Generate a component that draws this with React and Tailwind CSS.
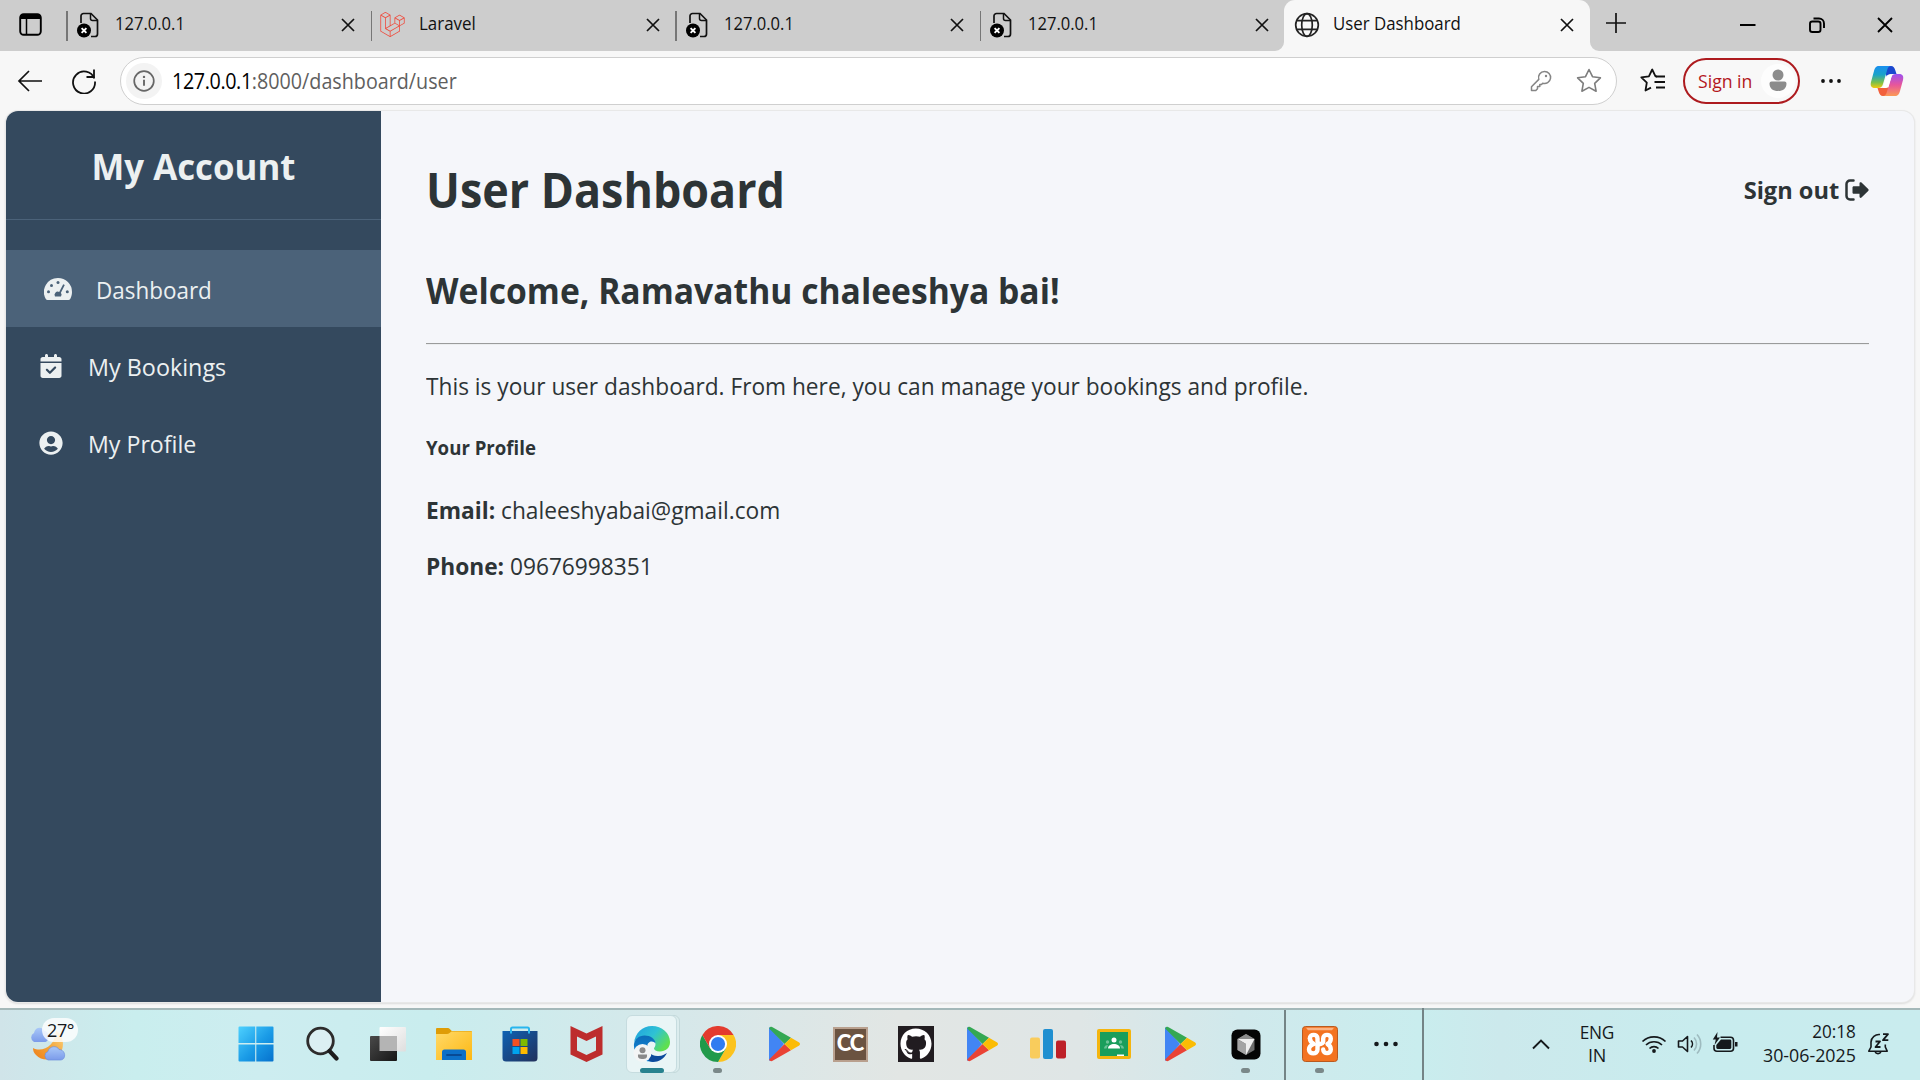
import React from "react";
import { FaUserCircle, FaGithub } from "react-icons/fa";
import { FaCalendarCheck } from "react-icons/fa6";
import { SiLaravel } from "react-icons/si";

/* ---------- small shared icons ---------- */

function Cross({ size }) {
  return (
    <svg width={size} height={size} viewBox="0 0 14 14" fill="none" stroke="#111" strokeWidth="1.7">
      <path d="M1 1l12 12M13 1L1 13" />
    </svg>
  );
}

function PageErrorIcon() {
  return (
    <svg width="24" height="26" viewBox="0 0 24 26" fill="none">
      <path d="M5 11V4a2.500 2.500 0 0 1 2.500-2.500H15L21.500 8v14a2.500 2.500 0 0 1-2.500 2.500h-4" stroke="#111" strokeWidth="1.700" />
      <path d="M14.500 1.500V6.500a2 2 0 0 0 2 2h5" stroke="#111" strokeWidth="1.500" />
      <circle cx="8" cy="18.500" r="7" fill="#000" />
      <path d="M5.600 16.100l4.800 4.800M10.400 16.100l-4.800 4.800" stroke="#fff" strokeWidth="1.900" />
    </svg>
  );
}

function GlobeIcon() {
  return (
    <svg width="26" height="26" viewBox="0 0 26 26" fill="none" stroke="#222" strokeWidth="1.700">
      <circle cx="13" cy="13" r="11.300" />
      <ellipse cx="13" cy="13" rx="5.300" ry="11.300" />
      <path d="M3 8.700h20M3 17.300h20" />
    </svg>
  );
}

function GaugeIcon() {
  return (
    <svg width="28" height="22" viewBox="0 0 28 22">
      <path d="M14 0a14 14 0 0 1 14 14c0 2.600-.7 4.900-1.800 7a2 2 0 0 1-1.700 1H3.500a2 2 0 0 1-1.700-1A14 14 0 0 1 14 0z" fill="#ecf0f1" />
      <g fill="#4b6279">
        <circle cx="14" cy="4.500" r="1.500" />
        <circle cx="7.500" cy="7.600" r="1.500" />
        <circle cx="4.500" cy="13.800" r="1.500" />
        <circle cx="23.300" cy="13.800" r="1.500" />
        <path d="M19.200 6.200l1.600.9-3.900 7.700a3.200 3.200 0 0 1 .1 3.700h-6a3.200 3.200 0 0 1 4.200-4.500z" />
      </g>
    </svg>
  );
}

/* ---------- browser tabs ---------- */

function Tab({ icon, label, scale }) {
  return (
    <div className="flex h-[51px] w-[304.500px] shrink-0 items-center">
      <div className="h-[30px] w-[1.500px] bg-[#767676]" />
      <div className="ml-[7px] flex w-[26px] justify-center pb-[2px]">{icon}</div>
      <span className={"ml-[14px] -mt-[5px] flex-1 origin-left text-[18px] leading-6 text-[#111] " + scale}>{label}</span>
      <div className="mr-[15.500px] pb-px">
        <Cross size={14} />
      </div>
    </div>
  );
}

function TabStrip() {
  return (
    <div className="flex h-[51px] bg-[#cdcdcd]">
      <div className="flex w-[66px] items-center pb-[2px] pl-[18.500px]">
        <svg width="23" height="23" viewBox="0 0 23 23" fill="none">
          <rect x="1.200" y="1.200" width="20.600" height="20.600" rx="3.500" stroke="#000" strokeWidth="1.900" />
          <path d="M1 6V4.500A3.500 3.500 0 0 1 4.500 1h14A3.500 3.500 0 0 1 22 4.500V6z" fill="#000" />
          <path d="M7.500 6v15.500" stroke="#000" strokeWidth="1.500" />
        </svg>
      </div>
      <Tab icon={<PageErrorIcon />} label="127.0.0.1" scale="scale-x-[.92]" />
      <Tab icon={<SiLaravel size={25} color="#ef4a3c" />} label="Laravel" scale="scale-x-[.94]" />
      <Tab icon={<PageErrorIcon />} label="127.0.0.1" scale="scale-x-[.92]" />
      <Tab icon={<PageErrorIcon />} label="127.0.0.1" scale="scale-x-[.92]" />
      <div className="-ml-[9px] flex shrink-0 items-end">
        <svg width="9" height="9" viewBox="0 0 9 9">
          <path d="M9 0v9H0A9 9 0 0 0 9 0z" fill="#f7f7f7" />
        </svg>
        <div className="flex h-[51px] w-[306px] items-center rounded-t-[11px] bg-[#f7f7f7] pl-[10px]">
          <div className="pb-[2px]">
            <GlobeIcon />
          </div>
          <span className="ml-[13px] -mt-[5px] flex-1 origin-left scale-x-[.935] text-[18px] leading-6 text-[#111]">User Dashboard</span>
          <div className="mr-[16.500px] pb-px">
            <Cross size={14} />
          </div>
        </div>
        <svg width="9" height="9" viewBox="0 0 9 9">
          <path d="M0 0v9h9A9 9 0 0 1 0 0z" fill="#f7f7f7" />
        </svg>
      </div>
      <div className="ml-[6px] flex h-[46px] items-center">
        <svg width="22" height="22" viewBox="0 0 22 22" stroke="#111" strokeWidth="1.700">
          <path d="M11 1v20M1 11h20" />
        </svg>
      </div>
      <div className="ml-auto flex items-center pb-px pr-[27px]">
        <svg width="16" height="16" viewBox="0 0 16 16" stroke="#000" strokeWidth="2">
          <path d="M0 8h15.500" />
        </svg>
        <svg className="ml-[53px]" width="16" height="16" viewBox="0 0 16 16" fill="none" stroke="#000" strokeWidth="1.900">
          <rect x="1" y="4.500" width="10.500" height="10.500" rx="2.300" />
          <path d="M4.500 1.500H10a5 5 0 0 1 5 5V11" />
        </svg>
        <div className="ml-[52px]">
          <svg width="16" height="16" viewBox="0 0 16 16" stroke="#000" strokeWidth="1.800">
            <path d="M1 1l14 14M15 1L1 15" />
          </svg>
        </div>
      </div>
    </div>
  );
}

/* ---------- address bar ---------- */

function CopilotIcon() {
  return (
    <svg width="34" height="32" viewBox="0 0 34 32">
      <defs>
        <linearGradient id="cpA" x1="0" y1="0" x2="0" y2="1">
          <stop offset="0" stopColor="#1a8ff0" />
          <stop offset=".4" stopColor="#1ba3c8" />
          <stop offset=".75" stopColor="#7cc04a" />
          <stop offset="1" stopColor="#f4c90c" />
        </linearGradient>
        <linearGradient id="cpB" x1="0" y1="0" x2="0" y2="1">
          <stop offset="0" stopColor="#9d50f0" />
          <stop offset=".5" stopColor="#e8569a" />
          <stop offset="1" stopColor="#fb9a55" />
        </linearGradient>
      </defs>
      <path d="M18 1h3c2.500 0 3.500 1.800 4.200 4l1.300 4h-6c-2 0-3 1-3.600 3l-2-5z" fill="#1b48cf" />
      <path d="M16 31h-3c-2.500 0-3.500-1.800-4.200-4l-1.300-4h6c2 0 3-1 3.600-3l2 5z" fill="#f2603c" />
      <path d="M9 1h12c-2 0-3 1.200-3.700 3.500L13 19c-.8 2.800-2 4-5 4H5c-4 0-4.800-2.500-4-6L4 6c1-3.500 2-5 5-5z" fill="url(#cpA)" />
      <path d="M25 31H13c2 0 3-1.200 3.700-3.500L21 13c.8-2.800 2-4 5-4h3c4 0 4.800 2.500 4 6l-3 11c-1 3.500-2 5-5 5z" fill="url(#cpB)" />
      <path d="M18.800 10h2.600c.6 0 .6.300.4 1l-3 10c-.5 1.300-1 2-2.600 2h-2.800c-.5 0-.5-.3-.3-.8l3.200-10.500c.4-1.200 1.200-1.700 2.500-1.700z" fill="#fff" />
    </svg>
  );
}

function Toolbar() {
  return (
    <div className="flex h-[60px] items-center bg-[#f7f7f7] pb-[1px]">
      <svg className="ml-[17px]" width="26" height="24" viewBox="0 0 26 24" fill="none" stroke="#111" strokeWidth="1.700">
        <path d="M12 2L2 12l10 10M2 12h23" />
      </svg>
      <svg className="ml-[28px]" width="26" height="26" viewBox="0 0 26 26" fill="none" stroke="#111" strokeWidth="1.800">
        <path d="M23.300 10.500A11 11 0 1 0 24 13.500" />
        <path d="M23 1.500V9h-7.500" />
      </svg>
      <div className="ml-[23px] flex h-[48px] w-[1497px] shrink-0 items-center rounded-full border-[1.500px] border-[#cfcfcf] bg-white">
        <div className="ml-[5px] flex size-9 items-center justify-center rounded-full bg-[#f3f3f3]">
          <svg width="22" height="22" viewBox="0 0 22 22" fill="none">
            <circle cx="11" cy="11" r="9.800" stroke="#666" strokeWidth="1.700" />
            <path d="M11 9.800v6" stroke="#666" strokeWidth="1.900" />
            <circle cx="11" cy="6.900" r="1.200" fill="#666" />
          </svg>
        </div>
        <div className="ml-[10px] origin-left scale-x-[.939] whitespace-nowrap pt-px text-[21px] leading-[30px] text-[#5f5f5f]">
          <span className="tracking-[-0.400px] text-black">127.0.0.1</span>:8000/dashboard/user
        </div>
        <svg className="ml-auto" width="22" height="22" viewBox="0 0 22 22" fill="none" stroke="#858585" strokeWidth="1.500">
          <path d="M14.500 1.500a6 6 0 1 1-1.800 11.700L11.500 14.500H9.800v2H7.500v2.200L5.800 20.500H1.500v-3.800l7.300-7.300A6 6 0 0 1 14.500 1.500z" strokeLinejoin="round" />
          <circle cx="16" cy="6" r="1.200" fill="#858585" stroke="none" />
        </svg>
        <svg className="ml-[24px] mr-[14px]" width="26" height="25" viewBox="0 0 26 25" fill="none" stroke="#7d7d7d" strokeWidth="1.600" strokeLinejoin="round">
          <path d="M13 1.500l3.500 7.200 7.900 1.100-5.700 5.500 1.400 7.900-7.100-3.800-7.100 3.800 1.400-7.900-5.700-5.500 7.900-1.100z" />
        </svg>
      </div>
      <svg className="ml-[23px]" width="26" height="25" viewBox="0 0 26 25" fill="none" stroke="#111" strokeWidth="1.800" strokeLinejoin="round">
        <path d="M16.800 8.500l-1.300-.2L12.200 1.500 8.900 8.300l-7.600 1.100 5.500 5.300-1.300 7.800 5.500-2.900" />
        <path d="M16 8.500h9M14.500 14h10.500M16 19.500h9" />
      </svg>
      <div className="ml-[17px] flex h-[46px] w-[117px] shrink-0 items-center rounded-full border-2 border-[#ad1a1e] bg-[#f8f8f8] pl-[13px]">
        <span className="w-[56px] origin-left scale-x-[.98] whitespace-nowrap text-[18px] leading-6 text-[#b3171d]">Sign in</span>
        <div className="ml-[7px] flex size-[34px] items-center justify-center rounded-full bg-[#fdfdfd]">
          <svg width="18" height="23" viewBox="0 0 18 23" fill="#8c8c8c">
            <circle cx="9" cy="6" r="5.500" />
            <path d="M2.500 12.500h13A2 2 0 0 1 17.500 14.500c0 5-3.500 7.500-8.500 7.500S.5 19.500.5 14.500a2 2 0 0 1 2-2z" />
          </svg>
        </div>
      </div>
      <svg className="ml-[20px]" width="22" height="6" viewBox="0 0 22 6" fill="#111">
        <circle cx="3" cy="3" r="1.900" />
        <circle cx="11" cy="3" r="1.900" />
        <circle cx="19" cy="3" r="1.900" />
      </svg>
      <div className="ml-[28px]">
        <CopilotIcon />
      </div>
    </div>
  );
}

/* ---------- page ---------- */

function NavItem({ icon, label, active, scale }) {
  return (
    <div className={"flex h-[77px] items-center pt-[2px] text-[#ecf0f1] " + (active ? "bg-[#4b6279] pl-[37px]" : "pl-[30px]")}>
      <div className="flex w-[30px] justify-center pb-px">{icon}</div>
      <span className={"origin-left whitespace-nowrap pt-px text-[24px] leading-9 " + (active ? "ml-[23px] " : "ml-[22px] ") + scale}>{label}</span>
    </div>
  );
}

function Sidebar() {
  return (
    <div className="w-[375px] shrink-0 bg-[#34495e]">
      <div className="flex h-[109px] items-center justify-center border-b border-[#4b6279] pt-[3px]">
        <h2 className="scale-x-[.967] text-[36px] font-bold leading-[54px] text-[#ecf0f1]">My Account</h2>
      </div>
      <div className="pt-[30px]">
        <NavItem active icon={<GaugeIcon />} label="Dashboard" scale="scale-x-[.935]" />
        <NavItem icon={<FaCalendarCheck size={24} />} label="My Bookings" scale="scale-x-[.973]" />
        <NavItem icon={<FaUserCircle size={24} />} label="My Profile" scale="scale-x-[.965]" />
      </div>
    </div>
  );
}

function Main() {
  return (
    <div className="min-w-0 flex-1 px-[45px] pt-[49px] text-[#2d3436]">
      <div className="flex h-[60px] items-center justify-between">
        <h1 className="origin-left scale-x-[.935] text-[48px] font-bold leading-[60px]">User Dashboard</h1>
        <div className="-mt-px flex items-center">
          <span className="origin-right scale-x-[.983] whitespace-nowrap text-[24px] font-bold leading-9">Sign out</span>
          <svg className="ml-[6px]" width="24" height="22" viewBox="0 0 24 22" fill="none">
            <path d="M8.500 1.500H5A3.500 3.500 0 0 0 1.500 5v12A3.500 3.500 0 0 0 5 20.500h3.500" stroke="#2d3436" strokeWidth="2.500" strokeLinecap="round" />
            <path d="M8.800 7.300h5.700V4.500c0-1.300 1.200-1.700 2-.9l6.700 6.500c.6.600.6 1.300 0 1.900l-6.700 6.500c-.8.800-2 .3-2-.9v-2.900H8.800c-.8 0-1.300-.6-1.300-1.300V8.600c0-.7.500-1.300 1.300-1.300z" fill="#2d3436" />
          </svg>
        </div>
      </div>
      <h2 className="mt-[44px] w-max origin-left scale-x-[.935] text-[36px] font-bold leading-[54px]">Welcome, Ramavathu chaleeshya bai!</h2>
      <div className="mt-[25px] h-[2px] border-b border-t border-b-[#ebedef] border-t-[#9a9b9b]" />
      <p className="mt-[23px] w-max origin-left scale-x-[.9455] text-[24px] leading-9">
        This is your user dashboard. From here, you can manage your bookings and profile.
      </p>
      <h5 className="mt-[29px] w-max origin-left scale-x-[.931] text-[20px] font-bold leading-[30px]">Your Profile</h5>
      <p className="mt-[29px] w-max origin-left scale-x-[.947] text-[24px] leading-9">
        <strong>Email:</strong> chaleeshyabai@gmail.com
      </p>
      <p className="mt-[20px] w-max origin-left scale-x-[.946] text-[24px] leading-9">
        <strong>Phone:</strong> 09676998351
      </p>
    </div>
  );
}

/* ---------- taskbar ---------- */

function PlayIcon() {
  return (
    <svg width="33" height="36" viewBox="0 0 33 36">
      <path d="M1 3v30c0 1 .4 1.600 1 2l14-17L2 1C1.400 1.400 1 2 1 3z" fill="#4285f4" />
      <path d="M2 1.200C3 .6 4 .8 5 1.400l18 10.400L16.500 18 1.200 2.500c.1-.6.3-1 .8-1.300z" fill="#34a853" />
      <path d="M2 34.800c1 .6 2 .4 3-.2l18-10.400L16.500 18 1.200 33.500c.1.600.3 1 .8 1.300z" fill="#ea4335" />
      <path d="M23 11.800l7.800 4.400c1.600 1 1.600 2.600 0 3.600L23 24.200 16.500 18z" fill="#fbbc04" />
    </svg>
  );
}

function StartIcon() {
  return (
    <svg width="36" height="36" viewBox="0 0 36 36">
      <defs>
        <linearGradient id="win" gradientUnits="userSpaceOnUse" x1="0" y1="0" x2="36" y2="36">
          <stop offset="0" stopColor="#4fd2ff" />
          <stop offset=".55" stopColor="#199ae6" />
          <stop offset="1" stopColor="#0670cc" />
        </linearGradient>
      </defs>
      <path d="M1.500.5H17.200V17H.5V1.500a1 1 0 0 1 1-1zM18.300.5H34.500a1 1 0 0 1 1 1V17H18.300zM.5 18.500H17.200V35.500H1.500a1 1 0 0 1-1-1zM18.300 18.500H35.500v16a1 1 0 0 1-1 1H18.300z" fill="url(#win)" />
    </svg>
  );
}

function SearchIcon() {
  return (
    <svg width="34" height="36" viewBox="0 0 34 36" fill="none">
      <circle cx="15.500" cy="15" r="12.800" stroke="#2d2c2c" strokeWidth="2.800" fill="#dceff3" />
      <path d="M24.500 25l7 7.500" stroke="#1d1c1c" strokeWidth="4.200" strokeLinecap="round" />
    </svg>
  );
}

function TaskViewIcon() {
  return (
    <svg width="36" height="36" viewBox="0 0 36 36">
      <defs>
        <linearGradient id="tvA" x1="0" y1="0" x2="1" y2="1">
          <stop offset="0" stopColor="#4a4a4a" />
          <stop offset="1" stopColor="#161616" />
        </linearGradient>
        <linearGradient id="tvB" x1="0" y1="0" x2="1" y2="1">
          <stop offset="0" stopColor="#fff" />
          <stop offset="1" stopColor="#dedede" />
        </linearGradient>
      </defs>
      <rect x="9.500" y="1" width="26.500" height="24.500" rx="1" fill="url(#tvB)" />
      <rect x="0" y="10" width="27" height="25" rx="1" fill="url(#tvA)" />
      <rect x="9.500" y="10" width="17.500" height="15" fill="#b4b4b4" />
    </svg>
  );
}

function FolderIcon() {
  return (
    <svg width="36" height="34" viewBox="0 0 36 34">
      <defs>
        <linearGradient id="fol" x1="0" y1="0" x2="1" y2="1">
          <stop offset="0" stopColor="#ffd968" />
          <stop offset="1" stopColor="#fdb813" />
        </linearGradient>
      </defs>
      <path d="M0 2a1 1 0 0 1 1-1h10.500c1 0 1.500.3 2.300 1l2 2H35a1 1 0 0 1 1 1v3H0z" fill="#df9c06" />
      <path d="M0 7h11c1 0 1.700-.3 2.500-1l2-1.500H36V33H0z" fill="url(#fol)" />
      <path d="M6 33v-8a2.500 2.500 0 0 1 2.500-2.500h19A2.500 2.500 0 0 1 30 25v8z" fill="#0c70c8" />
      <path d="M11 28h14" stroke="#084a94" strokeWidth="1.800" strokeLinecap="round" />
    </svg>
  );
}

function StoreIcon() {
  return (
    <svg width="36" height="36" viewBox="0 0 36 36">
      <defs>
        <linearGradient id="sto" x1="0" y1="0" x2="1" y2="1">
          <stop offset="0" stopColor="#0e62b4" />
          <stop offset="1" stopColor="#22315c" />
        </linearGradient>
      </defs>
      <path d="M9 8V3a1.500 1.500 0 0 1 1.500-1.500h15A1.500 1.500 0 0 1 27 3v5" fill="none" stroke="#29b6ee" strokeWidth="2" />
      <path d="M.5 5H35.500V32a3.500 3.500 0 0 1-3.500 3.500H4A3.500 3.500 0 0 1 .5 32z" fill="url(#sto)" />
      <path d="M9 7.500V5M27 7.500V5" stroke="#29b6ee" strokeWidth="2" />
      <path d="M10.500 13h7v7h-7z" fill="#f25022" />
      <path d="M18.500 13h7v7h-7z" fill="#7fba00" />
      <path d="M10.500 21h7v7h-7z" fill="#00a4ef" />
      <path d="M18.500 21h7v7h-7z" fill="#ffb900" />
    </svg>
  );
}

function McAfeeIcon() {
  return (
    <svg width="33" height="36" viewBox="0 0 33 36">
      <path d="M.5 0L16.500 7.500 32.500 0V28.500L16.500 36 .5 28.500zM7 10.500V24.500L16.500 29 26 24.500V10.500L16.500 15z" fill="#bd2d2d" fillRule="evenodd" />
    </svg>
  );
}

function EdgeIcon() {
  return (
    <svg width="38" height="36" viewBox="0 0 38 36">
      <defs>
        <linearGradient id="edA" x1="0" y1="0" x2="1" y2=".6">
          <stop offset="0" stopColor="#1f9fe0" />
          <stop offset=".55" stopColor="#2fc2d4" />
          <stop offset="1" stopColor="#5fe04f" />
        </linearGradient>
        <linearGradient id="edB" x1="0" y1="0" x2="0" y2="1">
          <stop offset="0" stopColor="#0c6cb8" />
          <stop offset="1" stopColor="#1590e0" />
        </linearGradient>
      </defs>
      <path d="M1 17C2 7 9.500 0 19 0c10 0 18 7 18 16 0 6-4.500 9.500-10 9.500-4 0-6-1.500-6-3 0-1 1.500-1.800 1.500-4.500 0-4-4.500-7.500-10-7.500C7 10.500 2.500 13 1 17z" fill="url(#edA)" />
      <path d="M1 18c1-5 5-8.500 10.500-8.500 6 0 11 3.500 11 8-1.500-2.500-5.500-3-7.500 0-3 5 0 13 8 17.500C10 38 0 29 1 18z" fill="url(#edB)" />
      <path d="M14.500 19c-1.500 5 3 11.500 11 11 4 0 6-1.500 8.500-3-3 6-8.500 9-14 9-5 0-8-4-8-9 0-3 1-6 2.500-8z" fill="#0c4a9c" />
      <circle cx="9.500" cy="27" r="9" fill="#f3f5f5" />
      <circle cx="9.500" cy="24.300" r="3" fill="#8a8a8a" />
      <path d="M5 28.500h9c.5 4-2 4.500-4.500 4.500S4.500 32.500 5 28.500z" fill="#8a8a8a" />
    </svg>
  );
}

function ChromeIcon() {
  return (
    <svg width="36" height="36" viewBox="0 0 36 36">
      <path d="M18 9H33.600A18 18 0 0 1 18 36L25.800 22.500z" fill="#fcc31e" />
      <path d="M10.200 22.500L2.400 9A18 18 0 0 0 18 36l7.800-13.500z" fill="#219a4a" />
      <path d="M18 9H33.600A18 18 0 0 0 2.400 9l7.800 13.500z" fill="#e33b2e" />
      <circle cx="18" cy="18" r="9" fill="#fff" />
      <circle cx="18" cy="18" r="7.100" fill="#2f7cf0" />
    </svg>
  );
}

function BarsIcon() {
  return (
    <svg width="36" height="30" viewBox="0 0 36 30">
      <rect x="0" y="8.500" width="10" height="21" rx="2" fill="#f9cc5c" />
      <rect x="13" y="0" width="10" height="30" rx="2" fill="#1f8fd0" />
      <rect x="26" y="11.500" width="10" height="18" rx="2" fill="#bd2028" />
    </svg>
  );
}

function ClassroomIcon() {
  return (
    <svg width="34" height="30" viewBox="0 0 34 30">
      <rect x="0" y="0" width="34" height="30" rx="2" fill="#f4b50f" />
      <rect x="3" y="3" width="28" height="24" fill="#1a9e5c" />
      <circle cx="17" cy="11" r="2.500" fill="#fff" />
      <path d="M11 19.500c0-3 3-4.500 6-4.500s6 1.500 6 4.500z" fill="#fff" />
      <circle cx="10.500" cy="13" r="1.700" fill="#6cc297" />
      <circle cx="23.500" cy="13" r="1.700" fill="#6cc297" />
      <path d="M7 19.500c0-2.500 2-3.500 4-3.500l-1.500 3.500zM27 19.500c0-2.500-2-3.500-4-3.500l1.500 3.500z" fill="#6cc297" />
      <path d="M20 25.500h7v1.500h-7z" fill="#fff" />
    </svg>
  );
}

function CursorIcon() {
  return (
    <svg width="30" height="31" viewBox="0 0 30 31">
      <rect x=".5" y=".5" width="29" height="30" rx="6" fill="#050505" />
      <path d="M15 5l8.500 5v11L15 26l-8.500-5V10z" fill="#6d6d6d" />
      <path d="M6.500 10L15 5l8.500 5z" fill="#8c8c8c" />
      <path d="M6.500 10h17L15 26V15z" fill="#efefef" />
      <path d="M6.500 10L15 15v11l-8.500-5z" fill="#a4a4a4" />
    </svg>
  );
}

function XamppIcon() {
  return (
    <svg width="36" height="36" viewBox="0 0 36 36">
      <rect x=".5" y=".5" width="35" height="35" rx="3" fill="#f37321" stroke="#b95a20" />
      <path d="M4 1.800h28l-2 2.400H6z" fill="#fbb384" />
      <g fill="none" stroke="#fff" strokeWidth="4.400" strokeLinecap="round" strokeLinejoin="round">
        <path d="M7.800 12.500c0-4.800 7.700-4.800 7.700 0v3c0 1.500.8 2.500 2.500 2.500s3.200-1 3.200-2.500v-3c0-4.800 7.600-4.800 7.600 0 0 2.500-1 4.200-3.300 5.500 2.300 1.300 3.300 3 3.300 5.500 0 4.800-7.600 4.800-7.600 0" />
        <path d="M8 12.500c0 2.200 1.300 4.200 3.800 5.500-3 1-4.800 2.600-4.800 5.500 0 5.200 8.500 5.200 8.500 0v-3c0-1.500.8-2.500 2.500-2.500" />
      </g>
    </svg>
  );
}

function Slot({ children, dot }) {
  return (
    <div className="relative flex h-[68px] w-[66px] shrink-0 items-center justify-center">
      {children}
      {dot && <div className="absolute bottom-[5px] left-[28px] h-[5px] w-[9px] rounded-full bg-[#7a8889]" />}
    </div>
  );
}

function WeatherIcon() {
  return (
    <svg width="40" height="38" viewBox="0 0 40 38">
      <defs>
        <linearGradient id="moon" x1="1" y1="0" x2="0" y2="1">
          <stop offset="0" stopColor="#fcd98a" />
          <stop offset=".5" stopColor="#f3a63a" />
          <stop offset="1" stopColor="#ee7d18" />
        </linearGradient>
        <linearGradient id="cloud" x1="0" y1="0" x2="0" y2="1">
          <stop offset="0" stopColor="#a9c8f8" />
          <stop offset="1" stopColor="#7b9bea" />
        </linearGradient>
      </defs>
      <path d="M28 6c6 5 8.500 12 6 20-4 10-19 13-26 5-2-2-3-4-3-7 9 5 23-2 23-18z" fill="url(#moon)" />
      <path d="M6 18a5 5 0 0 1 0-9C7 3 14 2 16.500 7c5 0 6 11 0 11z" fill="url(#cloud)" />
      <path d="M20 36a4.500 4.500 0 0 1 0-8.500c1-5.500 9-6.500 11-2 7 0 7.500 10.500 1.500 10.500z" fill="url(#cloud)" stroke="#6d8fdc" strokeWidth=".7" />
    </svg>
  );
}

function Taskbar() {
  return (
    <div className="flex h-[72px] border-t-2 border-[#a4b8b9] bg-[linear-gradient(90deg,#d0e4e9_0px,#c9eeee_135px,#cdedf0_260px,#c9edee_430px,#d6e8ea_680px,#e2e6e4_900px,#dfe6e6_1080px,#d0e9ec_1240px,#c9edee_1420px,#cce9ec_1500px,#c8ecee_1700px,#c9ecee_1920px)] text-[#15191c]">
      <div className="relative w-[223px] shrink-0 pl-[28px] pt-[14px]">
        <WeatherIcon />
        <div className="absolute left-[42px] top-[8px] flex h-[24px] w-[36px] items-center justify-center rounded-full bg-white/80 pb-px pl-px text-[18px] leading-none tracking-[-0.500px]">
          27°
        </div>
      </div>
      <Slot><StartIcon /></Slot>
      <Slot><SearchIcon /></Slot>
      <Slot><TaskViewIcon /></Slot>
      <Slot><FolderIcon /></Slot>
      <Slot><StoreIcon /></Slot>
      <Slot><McAfeeIcon /></Slot>
      <div className="relative flex h-[68px] w-[66px] shrink-0 items-center justify-center">
        <div className="absolute left-[10px] top-[5px] h-[58px] w-[51px] rounded-[6px] border border-[#c3d8da] bg-[#dcedee]" />
        <div className="absolute left-[6.500px] top-[5px] h-[58px] w-[51px] rounded-[6px] border border-[#c6dcdf] bg-[#e9f5f6]" />
        <div className="relative"><EdgeIcon /></div>
        <div className="absolute bottom-[5px] left-[21px] h-[5px] w-[24px] rounded-full bg-[#28828f]" />
      </div>
      <Slot dot><ChromeIcon /></Slot>
      <Slot><PlayIcon /></Slot>
      <Slot>
        <div className="flex size-[35px] items-center justify-center border-2 border-[#b9a08e] bg-[#6b5341] pb-[2px] font-['Lato',sans-serif] text-[22px] font-black leading-none tracking-[-1px] text-white">CC</div>
      </Slot>
      <Slot>
        <div className="flex size-[36px] items-center justify-center bg-[#211c20]">
          <FaGithub size={32} color="#fff" />
        </div>
      </Slot>
      <Slot><PlayIcon /></Slot>
      <Slot><BarsIcon /></Slot>
      <Slot><ClassroomIcon /></Slot>
      <Slot><PlayIcon /></Slot>
      <Slot dot><CursorIcon /></Slot>
      <div className="ml-[5px] w-[2px] bg-[#748486]" />
      <div className="ml-px flex">
        <Slot dot><XamppIcon /></Slot>
        <Slot>
          <svg width="26" height="6" viewBox="0 0 26 6" fill="#15191c">
            <circle cx="3.500" cy="3" r="2.300" />
            <circle cx="13" cy="3" r="2.300" />
            <circle cx="22.500" cy="3" r="2.300" />
          </svg>
        </Slot>
      </div>
      <div className="-mt-[2px] ml-[3px] w-[2px] bg-[#748486]" />
      <div className="flex h-[68px] flex-1 items-center justify-end pr-[29px]">
        <svg width="18" height="11" viewBox="0 0 18 11" fill="none" stroke="#15191c" strokeWidth="1.900">
          <path d="M1 9.500l8-8 8 8" />
        </svg>
        <div className="ml-[26px] flex w-[42px] flex-col items-center text-[18px] leading-[23px] tracking-[-0.300px]">
          <span className="scale-x-[.96]">ENG</span>
          <span>IN</span>
        </div>
        <svg className="ml-[23px]" width="26" height="20" viewBox="0 0 26 20" fill="none" stroke="#15191c" strokeWidth="1.700">
          <path d="M1.500 7.500a16.500 16.500 0 0 1 23 0M5 11a11.500 11.500 0 0 1 16 0M8.500 14.500a6.500 6.500 0 0 1 9 0" />
          <circle cx="13" cy="17" r="1.900" fill="#15191c" stroke="none" />
        </svg>
        <svg className="ml-[10px]" width="26" height="22" viewBox="0 0 26 22" fill="none" stroke="#15191c" strokeWidth="1.600" strokeLinejoin="round">
          <path d="M1.500 8v6h4l5 4.500v-15L5.500 8z" />
          <path d="M14 7.500a5 5 0 0 1 0 7" />
          <path d="M17 4.500a9.500 9.500 0 0 1 0 13M20 1.500a14 14 0 0 1 0 19" stroke="#9ebbbf" />
        </svg>
        <svg className="ml-[9px] -mt-[2px]" width="26" height="22" viewBox="0 0 26 22" fill="none">
          <path d="M8.500 5.200H18.500a3 3 0 0 1 3 3v8a3 3 0 0 1-3 3H5a3 3 0 0 1-3-3V13" stroke="#15191c" strokeWidth="1.600" />
          <path d="M9 7.500h9a1.300 1.300 0 0 1 1.300 1.300v6.800a1.300 1.300 0 0 1-1.300 1.300H5.600A1.300 1.300 0 0 1 4.300 15.600V13z" fill="#15191c" />
          <path d="M23 10h2.500v4.500H23z" fill="#15191c" />
          <path d="M5.500 0L.8 7.500h3L2.500 13 8 5.500H5z" fill="#15191c" />
        </svg>
        <div className="-mt-[2px] ml-[24px] flex flex-col items-end text-[18px] leading-[24px]">
          <span className="origin-right scale-x-[.95]">20:18</span>
          <span className="origin-right scale-x-[.99]">30-06-2025</span>
        </div>
        <svg className="ml-[11px]" width="24" height="24" viewBox="0 0 24 24" fill="none" stroke="#15191c" strokeWidth="1.600" strokeLinejoin="round">
          <path d="M13 2.500A8 8 0 0 0 4 10v5l-2.200 4.200H20.200L18.300 15v-2.500M8 19.500a3.200 3.200 0 0 0 6 0" />
          <path d="M8.500 9.500h4.500l-4.500 5.500H13.500M16 2.200h5l-5 6h5.300" strokeWidth="1.800" />
        </svg>
      </div>
    </div>
  );
}

export default function App() {
  return (
    <div className="flex h-[1080px] w-[1920px] flex-col overflow-hidden bg-[#f7f7f7] font-['Open_Sans','Noto_Sans',sans-serif]">
      <TabStrip />
      <Toolbar />
      <div className="mx-[6px] flex h-[891px] shrink-0 overflow-hidden rounded-[12px] bg-[#f5f6fa] shadow-[0_0_0_1px_#e8e8e8,0_1px_2px_1px_#dcdcdc]">
        <Sidebar />
        <Main />
      </div>
      <div className="h-[6px] shrink-0" />
      <Taskbar />
    </div>
  );
}
